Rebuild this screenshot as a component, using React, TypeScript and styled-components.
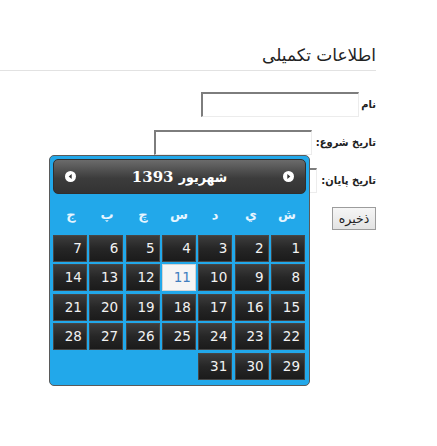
import React from "react";
import styled, { createGlobalStyle } from "styled-components";

const GlobalStyle = createGlobalStyle`
  html, body { margin: 0; padding: 0; background: #fff; }
  body { font-family: "DejaVu Sans", "Noto Sans", sans-serif; color: #222; }
  #root { min-height: 446px; }
`;

const Page = styled.div`
  width: 376px;
  min-height: 446px;
  direction: rtl;
  padding-top: 44px;
  box-sizing: border-box;
`;

const Heading = styled.h2`
  margin: 0;
  padding: 0 0 4px;
  font-size: 17px;
  font-weight: normal;
  line-height: 22px;
  color: #222;
  border-bottom: 1px solid #e2e2e2;
`;

const Form = styled.div`
  position: relative;
  padding-top: 21px;
`;

const Row = styled.div<{ $gap?: number }>`
  display: flex;
  align-items: center;
  gap: ${(p) => p.$gap ?? 4}px;
  height: 25px;
  margin-bottom: 13px;
`;

const Label = styled.label`
  font-family: "DejaVu Sans Condensed", "DejaVu Sans", sans-serif;
  font-size: 11px;
  font-weight: bold;
  color: #222;
  white-space: nowrap;
`;

const Input = styled.input`
  box-sizing: border-box;
  width: 158px;
  height: 25px;
  margin: 0;
  padding: 0 4px;
  background: #fff;
  border-top: 2px solid #7d7d7d;
  border-left: 2px solid #7d7d7d;
  border-right: 1px solid #ececec;
  border-bottom: 1px solid #ececec;
  outline: none;
`;

const Button = styled.button`
  box-sizing: border-box;
  width: 44px;
  height: 23px;
  margin: 0;
  padding: 0;
  font-family: "DejaVu Sans", sans-serif;
  font-size: 12.5px;
  color: #222;
  background: linear-gradient(#f6f6f6, #e3e3e3);
  border: 1px solid #9c9c9c;
  border-radius: 0;
`;

const Picker = styled.div`
  position: absolute;
  top: 84px;
  left: 49px;
  box-sizing: border-box;
  width: 261px;
  height: 231px;
  padding: 3px 3px 0;
  direction: rtl;
  background: #22a8ea;
  border: 1px solid #5a5a5a;
  border-radius: 5px;
`;

const Header = styled.div`
  box-sizing: border-box;
  height: 35px;
  display: flex;
  align-items: center;
  justify-content: space-between;
  padding: 0 11px;
  border: 1px solid #2f2f2f;
  border-radius: 5px;
  background: linear-gradient(#6b6b6b, #3c3c3c 55%, #333);
`;

const Title = styled.div`
  font-family: "DejaVu Serif", "DejaVu Sans Condensed", "DejaVu Sans", serif;
  font-size: 15px;
  font-weight: bold;
  color: #fff;
  direction: rtl;
`;

const TitleMonth = styled.span`
  font-family: "DejaVu Sans Condensed", "DejaVu Sans", sans-serif;
  font-size: 14px;
`;

const NavIcon = styled.svg`
  display: block;
  width: 11px;
  height: 11px;
`;

const Weekdays = styled.div`
  display: grid;
  grid-template-columns: repeat(7, 1fr);
  width: 252px;
  margin: 0 1px;
  height: 41px;
  align-items: center;
`;

const Weekday = styled.span`
  text-align: center;
  font-size: 13px;
  font-weight: bold;
  color: #e6f5ff;
`;

const Days = styled.div`
  display: grid;
  grid-template-columns: repeat(7, 1fr);
  grid-auto-rows: 27px;
  column-gap: 2.5px;
  row-gap: 2.4px;
  width: 252px;
  margin: 0 1px;
`;

const Day = styled.div<{ $active?: boolean }>`
  box-sizing: border-box;
  border: 1px solid ${(p) => (p.$active ? "#d3d3d3" : "#464646")};
  background: ${(p) =>
    p.$active ? "#f5f5f5" : "linear-gradient(#3d3d3d, #262626 50%, #1b1b1b)"};
  color: ${(p) => (p.$active ? "#3f7fc0" : "#f2f2f2")};
  font-size: 13.5px;
  line-height: 25px;
  text-align: right;
  padding-right: 4px;
  direction: ltr;
`;

const Arrow = ({ dir }: { dir: "prev" | "next" }) => (
  <NavIcon viewBox="0 0 11 11">
    <circle cx="5.5" cy="5.5" r="5.5" fill="#fff" />
    {dir === "next" ? (
      <path d="M4.3 3 L7.3 5.5 L4.3 8 Z" fill="#333" />
    ) : (
      <path d="M6.7 3 L3.7 5.5 L6.7 8 Z" fill="#333" />
    )}
  </NavIcon>
);

const weekdays = ["ش", "ي", "د", "س", "چ", "پ", "ج"];
const days = Array.from({ length: 31 }, (_, i) => i + 1);

export default function App() {
  return (
    <>
      <GlobalStyle />
      <Page>
        <Heading>اطلاعات تکمیلی</Heading>
        <Form>
          <Row $gap={2}>
            <Label>نام</Label>
            <Input />
          </Row>
          <Row>
            <Label>تاریخ شروع:</Label>
            <Input />
          </Row>
          <Row>
            <Label>تاریخ پایان:</Label>
            <Input />
          </Row>
          <Row>
            <Button>ذخیره</Button>
          </Row>
          <Picker>
            <Header>
              <Arrow dir="next" />
              <Title>
                <TitleMonth>شهریور</TitleMonth> 1393
              </Title>
              <Arrow dir="prev" />
            </Header>
            <Weekdays>
              {weekdays.map((w) => (
                <Weekday key={w}>{w}</Weekday>
              ))}
            </Weekdays>
            <Days>
              {days.map((d) => (
                <Day key={d} $active={d === 11}>
                  {d}
                </Day>
              ))}
            </Days>
          </Picker>
        </Form>
      </Page>
    </>
  );
}
